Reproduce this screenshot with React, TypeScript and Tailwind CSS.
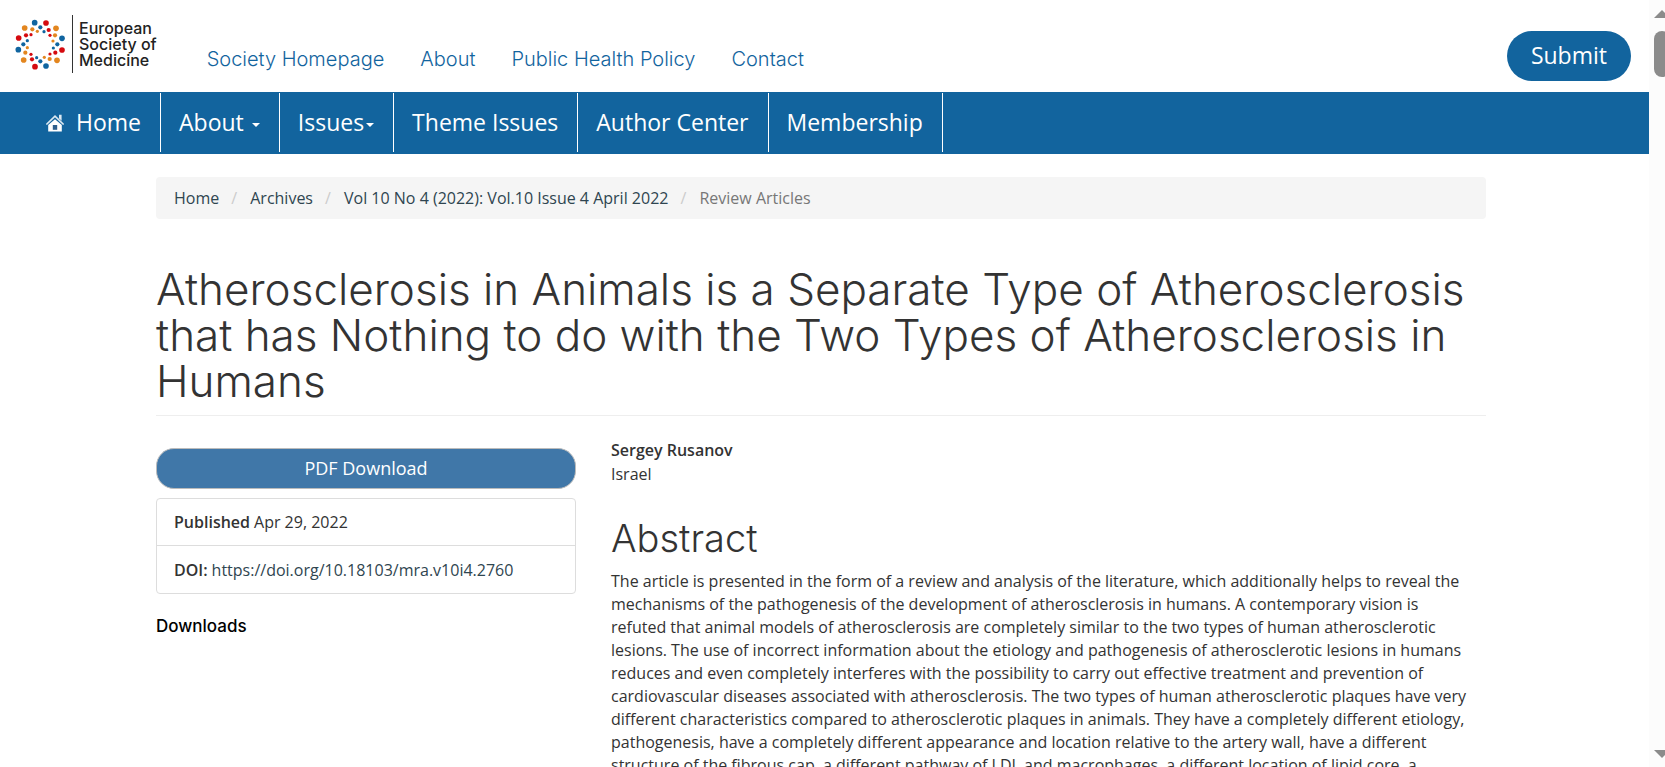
import React from "react";

type Dot = [number, number, string];

const BLUE = "#1065a0";
const RED = "#d50a0f";
const ORANGE = "#e3861f";

const outerDots: Dot[] = [
  [105, 67, BLUE], [139, 68, RED], [169, 84, ORANGE], [187, 114, BLUE],
  [187, 149, RED], [172, 180, ORANGE], [139, 197, BLUE], [106, 199, RED],
  [72, 179, ORANGE], [56, 148, BLUE], [57, 113, RED], [75, 83, ORANGE],
];
const middleDots: Dot[] = [
  [122, 81, BLUE], [147, 89, RED], [166, 105, ORANGE], [173, 132, BLUE],
  [167, 157, RED], [150, 176, ORANGE], [122, 183, BLUE], [97, 177, RED],
  [77, 157, ORANGE], [71, 132, BLUE], [79, 105, RED], [98, 87, ORANGE],
];
const innerDots: Dot[] = [
  [113, 93, ORANGE], [133, 94, BLUE], [151, 105, RED], [160, 122, ORANGE],
  [161, 143, BLUE], [151, 161, RED], [134, 171, ORANGE], [111, 172, BLUE],
  [94, 162, RED], [83, 142, ORANGE], [83, 121, BLUE], [94, 103, RED],
];

function LogoMark() {
  const ring = (dots: Dot[], r: number) =>
    dots.map(([x, y, fill]) => <circle key={`${x}-${y}`} cx={x} cy={y} r={r} fill={fill} />);
  return (
    <svg viewBox="46 56 153 153" className="size-[51px]" aria-hidden="true">
      {ring(outerDots, 8.5)}
      {ring(middleDots, 6.3)}
      {ring(innerDots, 4.8)}
    </svg>
  );
}

function HouseIcon() {
  return (
    <svg viewBox="0 0 18 18" className="size-[18px]" aria-hidden="true">
      <path d="M13 .8h2.6v6L13 4.5z" fill="#dbe8f1" />
      <path d="M9 5.2 15.8 11v6.6H2.2V11z" fill="#fff" />
      <path d="M.9 10 9 2.2l8.1 7.8" fill="none" stroke="#dbe8f1" strokeWidth="1.7" strokeLinecap="round" />
      <rect x="6.8" y="11" width="4.4" height="4.8" fill="#2d5f8d" />
    </svg>
  );
}

function Caret() {
  return (
    <svg viewBox="0 0 8 4" className="mt-1 h-1 w-2" aria-hidden="true">
      <path d="M0 0h8L4 4z" fill="#fff" />
    </svg>
  );
}

const topLinks = ["Society Homepage", "About", "Public Health Policy", "Contact"];
const navItem = "flex h-[59px] items-center border-r border-white pr-[19px] pl-[18px]";

export default function App() {
  return (
    <div className="flex h-screen overflow-hidden bg-white font-['Open_Sans',sans-serif] text-base text-[#333]">
      <div className="min-w-0 flex-1 overflow-hidden">
        <header className="flex h-[92px] items-start justify-between pr-[18px] pl-[15px]">
          <div className="flex">
            <a href="#" className="mt-[15px] flex h-[58px] items-center font-['Inter',sans-serif] text-[#222]">
              <LogoMark />
              <span className="ml-1.5 flex h-full items-center border-l border-[#333] pl-1.5 text-base leading-4 font-medium">
                <span>
                  European
                  <br />
                  Society of
                  <br />
                  Medicine
                </span>
              </span>
            </a>
            <nav aria-label="Society" className="ml-[50px] flex gap-9 pt-[45px] font-['Inter',sans-serif] text-xl leading-7 font-light text-[#12649e]">
              {topLinks.map((label) => (
                <a key={label} href="#">{label}</a>
              ))}
            </nav>
          </div>
          <button type="button" className="mt-[31px] h-[50px] rounded-full bg-[#12649e] px-6 pb-0.5 text-[23px] text-white">
            Submit
          </button>
        </header>

        <nav aria-label="Main" className="flex h-[62px] bg-[#12649e] pt-px pl-7 text-[23px] text-white">
          <a href="#" className={`${navItem} gap-3`}><HouseIcon />Home</a>
          <a href="#" className={`${navItem} gap-2`}>About<Caret /></a>
          <a href="#" className={`${navItem} gap-0.5`}>Issues<Caret /></a>
          <a href="#" className={navItem}>Theme Issues</a>
          <a href="#" className={navItem}>Author Center</a>
          <a href="#" className={navItem}>Membership</a>
        </nav>

        <main className="pt-[23px] pr-[163px] pl-[156px]">
          <nav aria-label="Breadcrumb" className="rounded bg-[#f5f5f5] px-[18px]">
            <ol className="flex h-[42px] items-center text-[#2f4550]">
              <li><a href="#">Home</a></li>
              <li className="flex"><span className="w-[31px] pl-3 text-[#ccc]">/</span><a href="#">Archives</a></li>
              <li className="flex"><span className="w-[31px] pl-3 text-[#ccc]">/</span><a href="#">Vol 10 No 4 (2022): Vol.10 Issue 4 April 2022</a></li>
              <li className="flex text-[#777]"><span className="w-[31px] pl-3 text-[#ccc]">/</span>Review Articles</li>
            </ol>
          </nav>

          <h1 className="mt-[47px] border-b border-[#eee] pb-[11px] font-['Inter',sans-serif] text-[44px] leading-[46px] font-light">
            Atherosclerosis in Animals is a Separate Type of Atherosclerosis that has Nothing to do with the Two Types of Atherosclerosis in Humans
          </h1>

          <div className="flex gap-[35px]">
            <aside className="w-[420px] shrink-0 pt-8">
              <a href="#" className="flex h-[41px] items-center justify-center rounded-[18px] border border-[#bbb] bg-[#4077a8] pb-0.5 text-lg text-white">
                PDF Download
              </a>
              <div className="mt-[9px] rounded border border-[#ddd]">
                <div className="flex h-[47px] items-center gap-1 border-b border-[#ddd] px-[17px]"><strong className="font-semibold">Published</strong> Apr 29, 2022</div>
                <div className="flex h-[47px] items-center gap-1 px-[17px]"><strong className="font-semibold">DOI:</strong> <a href="#" className="text-[#2f4550]">https://doi.org/10.18103/mra.v10i4.2760</a></div>
              </div>
              <h3 className="mt-5 font-['Inter',sans-serif] text-[17px] leading-6 font-medium text-black">Downloads</h3>
            </aside>

            <section className="min-w-0 flex-1 pt-[22px] pr-4">
              <strong className="block leading-6 font-semibold">Sergey Rusanov</strong>
              <span className="block leading-6">Israel</span>
              <h2 className="mt-8 font-['Inter',sans-serif] text-[38px] leading-10 font-light">Abstract</h2>
              <p className="mt-3 leading-[23px]">
                The article is presented in the form of a review and analysis of the literature, which additionally helps to reveal the mechanisms of the pathogenesis of the development of atherosclerosis in humans. A contemporary vision is refuted that animal models of atherosclerosis are completely similar to the two types of human atherosclerotic lesions. The use of incorrect information about the etiology and pathogenesis of atherosclerotic lesions in humans reduces and even completely interferes with the possibility to carry out effective treatment and prevention of cardiovascular diseases associated with atherosclerosis. The two types of human atherosclerotic plaques have very different characteristics compared to atherosclerotic plaques in animals. They have a completely different etiology, pathogenesis, have a completely different appearance and location relative to the artery wall, have a different structure of the fibrous cap, a different pathway of LDL and macrophages, a different location of lipid core, a
              </p>
            </section>
          </div>
        </main>
      </div>

      <div className="flex w-4 shrink-0 flex-col overflow-hidden bg-[#fcfcfc] pt-2.5 pb-[9px] pl-[5px]" aria-hidden="true">
        <svg viewBox="0 0 16 8" className="h-2 w-4 shrink-0"><path d="M0 8 8 0l8 8z" fill="#8b8b8b" /></svg>
        <div className="mt-[13px] h-[46px] w-4 shrink-0 rounded-lg bg-[#8b8b8b]" />
        <svg viewBox="0 0 16 8" className="mt-auto h-2 w-4 shrink-0"><path d="M0 0h16L8 8z" fill="#8b8b8b" /></svg>
      </div>
    </div>
  );
}
